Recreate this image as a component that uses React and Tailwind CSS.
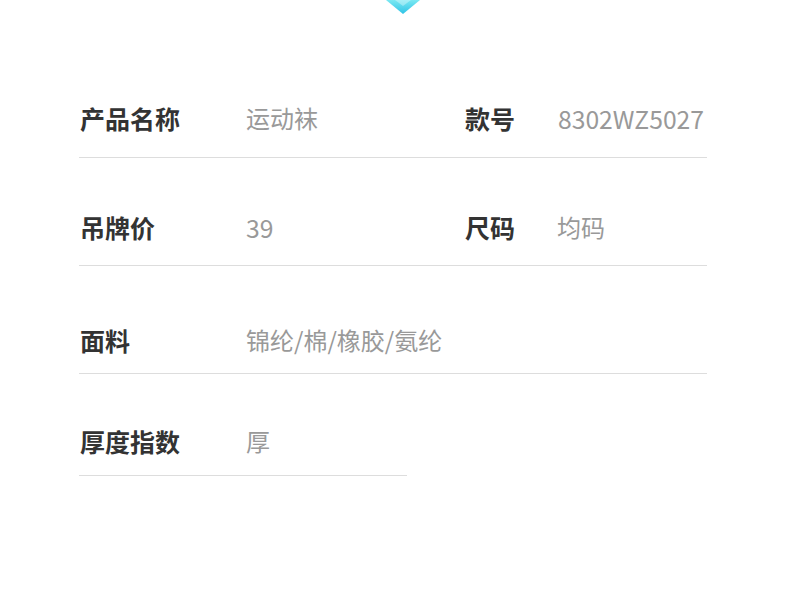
import React from "react";

const font = { fontFamily: '"Noto Sans CJK SC", "Noto Sans", sans-serif' };

function Cell({ label, value, labelW, valueSize = "text-[24px]" }) {
  return (
    <div className="flex items-center h-8">
      <span className={`${labelW} shrink-0 text-[25px] font-bold text-[#333333] leading-8`}>{label}</span>
      <span className={`${valueSize} text-[#999999] leading-8`}>{value}</span>
    </div>
  );
}

export default function App() {
  return (
    <div className="w-[790px] h-[603px] bg-white relative overflow-hidden" style={font}>
      {/* top chevron marker */}
      <svg className="absolute left-[385px] top-0" width="36" height="16" viewBox="0 0 36 16">
        <defs>
          <linearGradient id="chev" x1="0" y1="0" x2="0" y2="1">
            <stop offset="0" stopColor="#7ae8f2" />
            <stop offset="1" stopColor="#2fc3e6" />
          </linearGradient>
        </defs>
        <polygon points="1,0 35,0 18,14" fill="url(#chev)" />
        <polygon points="10,0 26,0 18,6" fill="#ffffff" fillOpacity="0.35" />
      </svg>

      <div className="ml-[79px] w-[628px] pt-[102px]">
        <div className="flex pl-[1px] pb-[23px] border-b border-[#dddddd]">
          <div className="w-[385px]">
            <Cell label="产品名称" value="运动袜" labelW="w-[166px]" />
          </div>
          <Cell label="款号" value="8302WZ5027" labelW="w-[93px]" valueSize="text-[24.7px]" />
        </div>

        <div className="flex pl-[1px] pt-[53px] pb-[22px] border-b border-[#dddddd]">
          <div className="w-[385px]">
            <Cell label="吊牌价" value="39" labelW="w-[166px]" valueSize="text-[24.7px]" />
          </div>
          <Cell label="尺码" value="均码" labelW="w-[92px]" />
        </div>

        <div className="pl-[1px] pt-[58px] pb-[17px] border-b border-[#dddddd]">
          <Cell label="面料" value="锦纶/棉/橡胶/氨纶" labelW="w-[166px]" />
        </div>

        <div className="w-[328px] pl-[1px] pt-[51px] pb-[18px] border-b border-[#dddddd]">
          <Cell label="厚度指数" value="厚" labelW="w-[166px]" />
        </div>
      </div>
    </div>
  );
}
